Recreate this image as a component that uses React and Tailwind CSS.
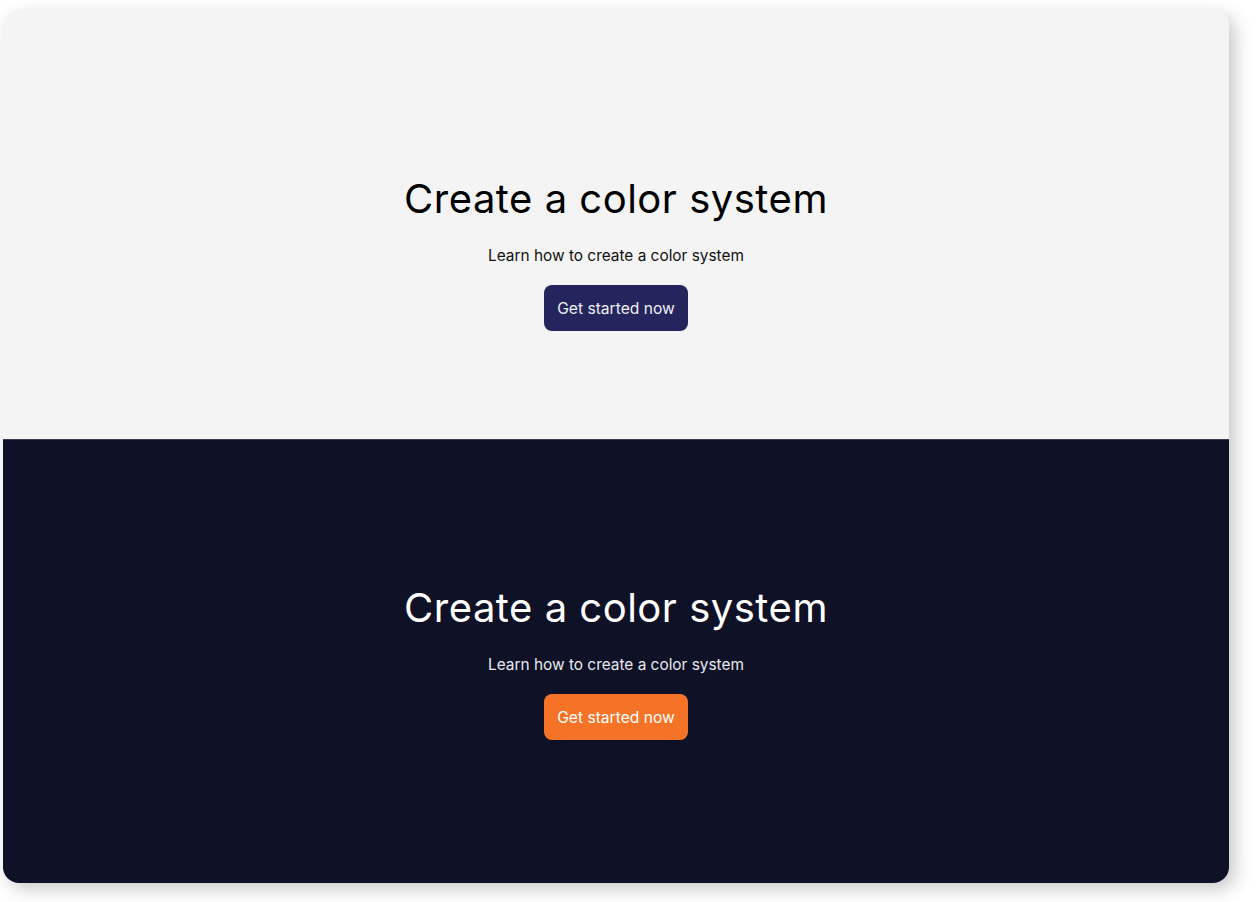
import React from 'react';

const Hero = ({ dark }) => (
  <section
    className={`flex flex-col items-center ${
      dark ? 'bg-[#0f1126] text-white h-[444px] pt-[144px] border-t border-[#3a3d52]' : 'bg-[#f4f4f4] text-black h-[429px] pt-[165px]'
    }`}
  >
    <h1 className="text-[40px] leading-[48px] font-normal tracking-[0.5px]">Create a color system</h1>
    <p className={`mt-[21px] text-[15.4px] leading-6 ${dark ? 'text-[#e8e8ee]' : 'text-[#111]'}`}>
      Learn how to create a color system
    </p>
    <button
      className={`mt-[17px] h-[46px] w-[144px] rounded-lg pt-px text-[15.6px] ${
        dark ? 'bg-[#f47326] text-white' : 'bg-[#25255e] text-[#f0f0f5]'
      }`}
    >
      Get started now
    </button>
  </section>
);

export default function App() {
  return (
    <div className="w-[1256px] h-[902px] bg-white pt-[10px] pl-[3px]" style={{ fontFamily: 'Inter, "Noto Sans", sans-serif' }}>
      <div className="w-[1226px] overflow-hidden rounded-2xl shadow-[6px_6px_18px_rgba(0,0,0,0.22)]">
        <Hero />
        <Hero dark />
      </div>
    </div>
  );
}
